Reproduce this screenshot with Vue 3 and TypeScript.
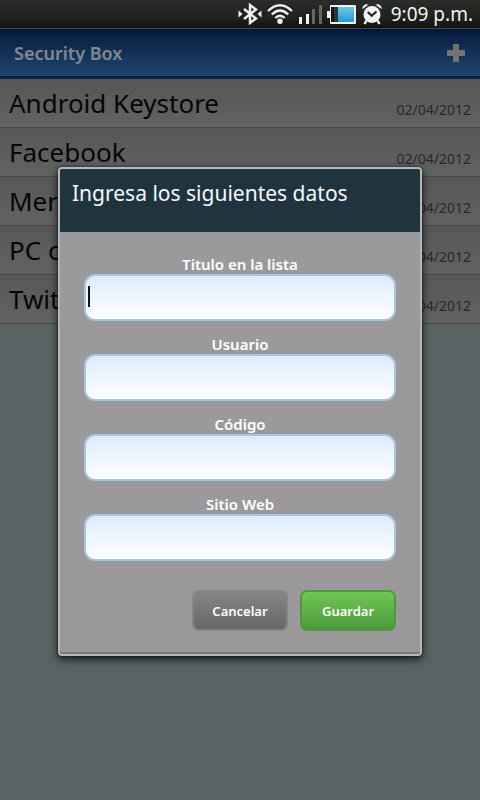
<script setup lang="ts">
import { reactive } from 'vue'

interface Entry {
  name: string
  date: string
}

interface Field {
  id: 'titulo' | 'usuario' | 'codigo' | 'sitio'
  label: string
}

const entries: Entry[] = [
  { name: 'Android Keystore', date: '02/04/2012' },
  { name: 'Facebook', date: '02/04/2012' },
  { name: 'Mer', date: '02/04/2012' },
  { name: 'PC c', date: '02/04/2012' },
  { name: 'Twit', date: '02/04/2012' },
]

const fields: Field[] = [
  { id: 'titulo', label: 'Titulo en la lista' },
  { id: 'usuario', label: 'Usuario' },
  { id: 'codigo', label: 'Código' },
  { id: 'sitio', label: 'Sitio Web' },
]

const form = reactive({ titulo: '', usuario: '', codigo: '', sitio: '' })
</script>

<template>
  <div class="screen">
    <div class="status">
      <svg width="24" height="22" viewBox="0 0 24 22" aria-hidden="true">
        <path d="M6 6 L18 15.500 L12 20 V2 L18 6.500 L6 16" fill="none" stroke="#f2f2f2" stroke-width="2.400" stroke-linejoin="miter" />
        <path d="M0.500 7.500 L4.500 11 L0.500 14.500 Z M23.500 7.500 L19.500 11 L23.500 14.500 Z" fill="#f2f2f2" />
      </svg>
      <svg class="wifi" width="26" height="22" viewBox="0 0 26 22" aria-hidden="true">
        <g fill="none" stroke="#f2f2f2" stroke-width="2.400">
          <path d="M1 8 Q13 -3.500 25 8" />
          <path d="M4.800 11.500 Q13 3.500 21.200 11.500" />
          <path d="M8.300 15 Q13 10.500 17.700 15" />
        </g>
        <circle cx="13" cy="18.300" r="2.700" fill="#f2f2f2" />
      </svg>
      <svg class="signal" width="23" height="22" viewBox="0 0 23 22" aria-hidden="true">
        <path d="M0 14h3v7H0zM7 11h3v10H7z" fill="#f2f2f2" />
        <path d="M13 6h3v15h-3zM20 2h3v19h-3z" fill="#666866" />
      </svg>
      <svg class="battery" width="30" height="22" viewBox="0 0 30 22" aria-hidden="true">
        <defs>
          <linearGradient id="charge" x1="0" y1="0" x2="0" y2="1">
            <stop offset="0" stop-color="#6dcbee" />
            <stop offset="1" stop-color="#219bcd" />
          </linearGradient>
        </defs>
        <rect x="0" y="8" width="4" height="7" fill="#f2f2f2" />
        <rect x="3" y="2" width="26" height="19" rx="1" fill="#f2f2f2" />
        <rect x="4" y="4" width="23" height="15" fill="#15191c" />
        <rect x="7" y="4" width="4" height="15" fill="#263743" />
        <rect x="11" y="4" width="16" height="15" fill="url(#charge)" />
      </svg>
      <svg class="alarm" width="20" height="22" viewBox="0 0 20 22" aria-hidden="true">
        <path d="M0.500 6 A4 4 0 0 1 6.500 1.800 Z M19.500 6 A4 4 0 0 0 13.500 1.800 Z" fill="#f2f2f2" />
        <path d="M4.500 17.500 L2.500 21 M15.500 17.500 L17.500 21" stroke="#f2f2f2" stroke-width="2.400" />
        <circle cx="10" cy="11.500" r="8.500" fill="#f2f2f2" />
        <path d="M5.800 9 L9.700 12.800 L14.500 8.500" fill="none" stroke="#222" stroke-width="2.200" />
      </svg>
      <span class="clock">9:09 p.m.</span>
    </div>

    <main class="app">
      <header class="bar">
        <h1>Security Box</h1>
        <button class="add" type="button" aria-label="Agregar">
          <svg width="20" height="20" viewBox="0 0 20 20" aria-hidden="true">
            <path d="M7 1h6v6h6v6h-6v6H7v-6H1V7h6z" fill="#727272" />
          </svg>
        </button>
      </header>
      <ul class="list">
        <li v-for="entry in entries" :key="entry.name" class="row">
          <span class="name">{{ entry.name }}</span>
          <span class="date">{{ entry.date }}</span>
        </li>
      </ul>

      <div class="overlay">
        <form class="dialog" role="dialog" aria-labelledby="dialog-title" @submit.prevent>
          <h2 id="dialog-title">Ingresa los siguientes datos</h2>
          <div class="body">
            <div v-for="(field, index) in fields" :key="field.id" class="field">
              <label :for="field.id">{{ field.label }}</label>
              <div class="box">
                <input :id="field.id" v-model="form[field.id]" type="text" autocomplete="off" />
                <span v-if="index === 0" class="caret"></span>
              </div>
            </div>
            <div class="actions">
              <button class="cancel" type="button">Cancelar</button>
              <button class="save" type="submit">Guardar</button>
            </div>
          </div>
        </form>
      </div>
    </main>
  </div>
</template>

<style>
body {
  background: #596263;
}
</style>

<style scoped>
* {
  box-sizing: border-box;
}

.screen {
  display: flex;
  flex-direction: column;
  min-height: 100vh;
  font-family: "Noto Sans", "Open Sans", sans-serif;
}

.status {
  display: flex;
  align-items: center;
  justify-content: flex-end;
  height: 29px;
  padding-right: 7px;
  background: linear-gradient(#2b2d2c, #20221f 60%, #12140f);
  border-bottom: 1px solid #454747;
}

.wifi {
  margin-left: 5px;
}

.signal {
  margin-left: 6px;
}

.battery {
  margin-left: 5px;
}

.alarm {
  margin-left: 5px;
}

.clock {
  margin-left: 9px;
  font-size: 19px;
  line-height: 28px;
  color: #f2f2f2;
  white-space: nowrap;
}

.app {
  position: relative;
  flex: 1;
  background: #596263;
}

.bar {
  display: flex;
  align-items: center;
  justify-content: space-between;
  height: 50px;
  padding: 0 14px;
  background: linear-gradient(#03173a, #0b2447 20%, #21466e);
  border-bottom: 3px solid #0a2344;
}

h1 {
  margin: 0;
  font-size: 18px;
  line-height: 24px;
  font-weight: 600;
  color: #82898f;
}

.add {
  display: flex;
  padding: 0;
  border: 0;
  background: none;
}

.list {
  margin: 0;
  padding: 0;
  list-style: none;
  border-bottom: 1px solid #685f5c;
}

.row {
  display: flex;
  justify-content: space-between;
  height: 49px;
  padding: 0 9px;
  background: linear-gradient(#575757, #616262);
  border-bottom: 1px solid #4b4948;
}

.name {
  font-size: 26px;
  line-height: 48px;
  color: #050707;
}

.date {
  font-size: 14px;
  line-height: 20px;
  padding-top: 21px;
  color: #292929;
}

.overlay {
  position: absolute;
  inset: 0;
  display: flex;
  align-items: flex-start;
  justify-content: center;
  padding: 138px 58px 0;
}

.dialog {
  flex: 1;
  max-width: 480px;
  overflow: hidden;
  background: #9b999b;
  border: 2px solid #b5b7b8;
  border-radius: 4px;
  box-shadow: 0 3px 8px rgba(0, 0, 0, 0.8), 0 0 2px #222;
}

h2 {
  height: 63px;
  margin: 0;
  padding: 9px 12px;
  background: #203440;
  font-size: 21px;
  line-height: 30px;
  font-weight: 400;
  color: #f4fafc;
}

.body {
  display: flex;
  flex-direction: column;
  gap: 13px;
  padding: 22px 24px 21px;
  border-bottom: 2px solid #737a7c;
}

.field {
  display: flex;
  flex-direction: column;
}

label {
  font-size: 15px;
  line-height: 20px;
  font-weight: 600;
  text-align: center;
  color: #ffffff;
}

.box {
  position: relative;
  display: flex;
}

input {
  flex: 1;
  min-width: 0;
  height: 47px;
  padding: 0 10px;
  border: 2px solid #a4c6df;
  border-radius: 11px;
  background: linear-gradient(#d9ecff, #f1f5ff 50%, #fbfeff);
  font: inherit;
  font-size: 18px;
  outline: 0;
}

.caret {
  position: absolute;
  left: 4px;
  top: 12px;
  width: 2px;
  height: 21px;
  background: #101417;
}

.actions {
  display: flex;
  justify-content: flex-end;
  gap: 12px;
  padding-top: 16px;
}

.actions button {
  width: 96px;
  height: 41px;
  padding: 0;
  border-radius: 7px;
  font: inherit;
  font-size: 13px;
  font-weight: 600;
  color: #ffffff;
}

.actions .cancel {
  border: 2px solid #858585;
  background: linear-gradient(#858585, #686868);
}

.actions .save {
  border: 2px solid #4f9a3b;
  background: linear-gradient(#6fc653, #4f993d);
}
</style>
